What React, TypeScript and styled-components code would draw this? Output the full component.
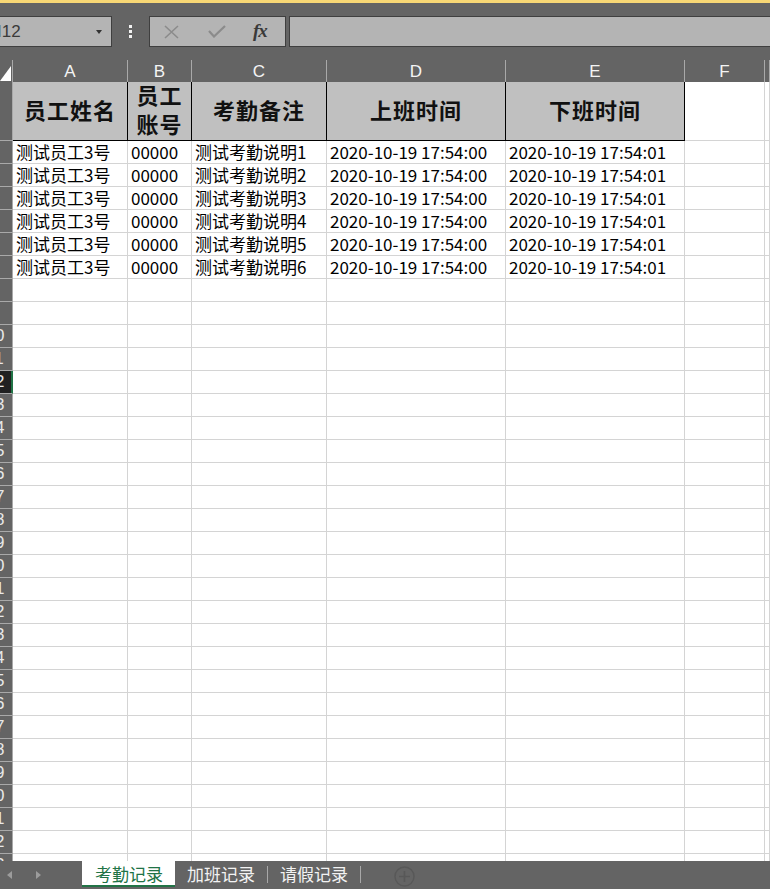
import React from 'react';
import styled, { createGlobalStyle } from 'styled-components';

const GlobalStyle = createGlobalStyle`
  html, body {
    margin: 0;
    padding: 0;
    height: 100%;
    overflow: hidden;
    background: #646464;
  }
  #root {
    height: 100%;
  }
`;

// column widths incl. the 1px right border of each cell
const GRID_COLS = '13px 115px 64px 135px 179px 179px 80px 1fr';

const Window = styled.div`
  height: 889px;
  display: flex;
  flex-direction: column;
  background: #646464;
  font-family: "Noto Sans CJK SC", "Liberation Sans", sans-serif;
  overflow: hidden;
`;

const TitleStrip = styled.div`
  flex: none;
  height: 3px;
  background: #f8d775;
`;

const FormulaBar = styled.div`
  flex: none;
  height: 57px;
  box-sizing: border-box;
  padding-top: 13px;
  display: flex;
  align-items: flex-start;
`;

const Box = styled.div`
  height: 31px;
  box-sizing: border-box;
  background: #b4b4b4;
  border: 1px solid #3f3f3f;
  display: flex;
  align-items: center;
`;

const NameBox = styled(Box)`
  width: 112px;
  border-left: none;
  position: relative;
`;

const NameText = styled.span`
  font-family: "Liberation Sans", sans-serif;
  font-size: 17px;
  color: #3a3a3a;
  margin-left: -3px;
`;

const Caret = styled.span`
  position: absolute;
  right: 9px;
  top: 13px;
  border-left: 3.5px solid transparent;
  border-right: 3.5px solid transparent;
  border-top: 4px solid #333;
`;

const Dots = styled.div`
  width: 3px;
  margin: 9px 17px 0 17px;
  display: flex;
  flex-direction: column;
  gap: 2px;

  span {
    display: block;
    width: 3px;
    height: 3px;
    background: #f2f2f2;
  }
`;

const FxBox = styled(Box)`
  width: 137px;
  padding-left: 13px;
  gap: 0;
`;

const IconSlot = styled.span<{ $w: number }>`
  width: ${({ $w }) => $w}px;
  display: flex;
  align-items: center;
`;

const FxGlyph = styled.span`
  font-family: "Liberation Serif", serif;
  font-style: italic;
  font-weight: bold;
  font-size: 19px;
  color: #3a3a3a;
  letter-spacing: -1px;
  margin-top: -2px;
`;

const FormulaInput = styled(Box)`
  flex: 1;
  margin-left: 3px;
  border-right: none;
`;

const Sheet = styled.div`
  flex: 1;
  overflow: hidden;
  display: flex;
  flex-direction: column;
`;

const SheetRow = styled.div<{ $h: number }>`
  flex: none;
  display: grid;
  grid-template-columns: ${GRID_COLS};
  height: ${({ $h }) => $h}px;
`;

const Corner = styled.div`
  position: relative;
  border-right: 1px solid #a9a9a9;
  border-bottom: 1px solid #bdbdbd;
  box-sizing: border-box;

  &::after {
    content: '';
    position: absolute;
    right: 1px;
    bottom: 1px;
    width: 0;
    height: 0;
    border-left: 11px solid transparent;
    border-bottom: 15px solid #ffffff;
  }
`;

const ColHead = styled.div`
  box-sizing: border-box;
  border-right: 1px solid #a9a9a9;
  border-bottom: 1px solid #bdbdbd;
  color: #f4f4f4;
  font-family: "Liberation Sans", sans-serif;
  font-size: 17px;
  display: flex;
  align-items: center;
  justify-content: center;
  padding-top: 2px;
`;

const RowHead = styled.div<{ $selected?: boolean }>`
  box-sizing: border-box;
  position: relative;
  overflow: hidden;
  background: ${({ $selected }) => ($selected ? '#202020' : '#646464')};
  border-right: 1px solid #a9a9a9;
  border-bottom: 1px solid #a9a9a9;
  box-shadow: ${({ $selected }) => ($selected ? 'inset -1px 0 0 #217346' : 'none')};
  ${({ $selected }) => ($selected ? 'border-right-color: #217346;' : '')}
`;

const RowLabel = styled.span`
  position: absolute;
  left: -20px;
  top: 0;
  bottom: 0;
  width: 30px;
  display: flex;
  align-items: center;
  justify-content: center;
  font-family: "Liberation Sans", sans-serif;
  font-size: 17px;
  color: #e8e8e8;
`;

const TitleCell = styled.div`
  box-sizing: border-box;
  background: #c0c0c0;
  border-right: 1px solid #000;
  border-bottom: 1px solid #000;
  display: flex;
  align-items: center;
  justify-content: center;
  text-align: center;
  white-space: pre-line;
  font-family: "Liberation Serif", "Noto Sans CJK SC", serif;
  font-weight: bold;
  font-size: 22px;
  line-height: 29px;
  letter-spacing: 1px;
  color: #111;
`;

const Cell = styled.div`
  box-sizing: border-box;
  background: #ffffff;
  border-right: 1px solid #d4d4d4;
  border-bottom: 1px solid #d4d4d4;
  padding: 0 0 0 3px;
  display: flex;
  align-items: center;
  white-space: nowrap;
  overflow: visible;
  font-size: 17px;
  color: #000;
  line-height: 22px;
`;

const TabBar = styled.div`
  flex: none;
  height: 28px;
  display: flex;
  align-items: flex-start;
  background: #646464;
`;

const ScrollArrows = styled.div`
  width: 82px;
  height: 28px;
  display: flex;
  align-items: center;
  padding-left: 7px;
  box-sizing: border-box;
  gap: 24px;
`;

const Arrow = styled.span<{ $dir: 'left' | 'right' }>`
  width: 0;
  height: 0;
  border-top: 4px solid transparent;
  border-bottom: 4px solid transparent;
  ${({ $dir }) =>
    $dir === 'left'
      ? 'border-right: 5px solid #9c9c9c;'
      : 'border-left: 5px solid #9c9c9c;'}
`;

const Tab = styled.div<{ $active?: boolean }>`
  height: 26px;
  box-sizing: border-box;
  padding: 0 12px 0 ${({ $active }) => ($active ? 13 : 12)}px;
  display: flex;
  align-items: center;
  font-size: 17px;
  color: ${({ $active }) => ($active ? '#217346' : '#f2f2f2')};
  background: ${({ $active }) => ($active ? '#ffffff' : 'transparent')};
  border-bottom: 2px solid ${({ $active }) => ($active ? '#217346' : 'transparent')};
`;

const TabDivider = styled.span`
  width: 1px;
  height: 17px;
  margin-top: 5px;
  background: #a8a8a8;
`;

const AddSheet = styled.div`
  margin-left: 33px;
  margin-top: 5px;
  display: flex;
`;

const columns = ['A', 'B', 'C', 'D', 'E', 'F', ''];
const titles = ['员工姓名', '员工\n账号', '考勤备注', '上班时间', '下班时间'];
const records = [1, 2, 3, 4, 5, 6].map((i) => [
  '测试员工3号',
  '00000',
  `测试考勤说明${i}`,
  '2020-10-19 17:54:00',
  '2020-10-19 17:54:01',
]);
const SELECTED_ROW = 12;
const LAST_ROW = 33;

const CloseIcon = () => (
  <svg width="17" height="14" viewBox="0 0 17 14">
    <path d="M2 1 L15 13 M15 1 L2 13" stroke="#8b8b8b" strokeWidth="1.6" fill="none" />
  </svg>
);

const CheckIcon = () => (
  <svg width="18" height="13" viewBox="0 0 18 13">
    <path d="M1 6 L6 11.5 L17 1" stroke="#8b8b8b" strokeWidth="2.2" fill="none" />
  </svg>
);

const PlusCircle = () => (
  <svg width="21" height="21" viewBox="0 0 21 21">
    <circle cx="10.5" cy="10.5" r="9.5" stroke="#585858" strokeWidth="1.4" fill="none" />
    <path d="M10.5 5 V16 M5 10.5 H16" stroke="#585858" strokeWidth="1.6" />
  </svg>
);

const App = () => {
  const emptyRows: number[] = [];
  for (let r = records.length + 2; r <= LAST_ROW; r++) emptyRows.push(r);

  return (
    <Window>
      <GlobalStyle />
      <TitleStrip />

      <FormulaBar>
        <NameBox>
          <NameText>I12</NameText>
          <Caret />
        </NameBox>
        <Dots>
          <span />
          <span />
          <span />
        </Dots>
        <FxBox>
          <IconSlot $w={45}>
            <CloseIcon />
          </IconSlot>
          <IconSlot $w={45}>
            <CheckIcon />
          </IconSlot>
          <IconSlot $w={20}>
            <FxGlyph>fx</FxGlyph>
          </IconSlot>
        </FxBox>
        <FormulaInput />
      </FormulaBar>

      <Sheet>
        <SheetRow $h={22}>
          <Corner />
          {columns.map((c, i) => (
            <ColHead key={i}>{c}</ColHead>
          ))}
        </SheetRow>

        <SheetRow $h={59}>
          <RowHead>
            <RowLabel>1</RowLabel>
          </RowHead>
          {titles.map((t) => (
            <TitleCell key={t}>{t}</TitleCell>
          ))}
          <Cell />
          <Cell />
        </SheetRow>

        {records.map((rec, i) => (
          <SheetRow $h={23} key={i}>
            <RowHead>
              <RowLabel>{i + 2}</RowLabel>
            </RowHead>
            {rec.map((v, j) => (
              <Cell key={j}>{v}</Cell>
            ))}
            <Cell />
            <Cell />
          </SheetRow>
        ))}

        {emptyRows.map((r) => (
          <SheetRow $h={23} key={r}>
            <RowHead $selected={r === SELECTED_ROW}>
              <RowLabel>{r}</RowLabel>
            </RowHead>
            {columns.map((_, j) => (
              <Cell key={j} />
            ))}
          </SheetRow>
        ))}
      </Sheet>

      <TabBar>
        <ScrollArrows>
          <Arrow $dir="left" />
          <Arrow $dir="right" />
        </ScrollArrows>
        <Tab $active>考勤记录</Tab>
        <Tab>加班记录</Tab>
        <TabDivider />
        <Tab>请假记录</Tab>
        <TabDivider />
        <AddSheet>
          <PlusCircle />
        </AddSheet>
      </TabBar>
    </Window>
  );
};

export default App;
